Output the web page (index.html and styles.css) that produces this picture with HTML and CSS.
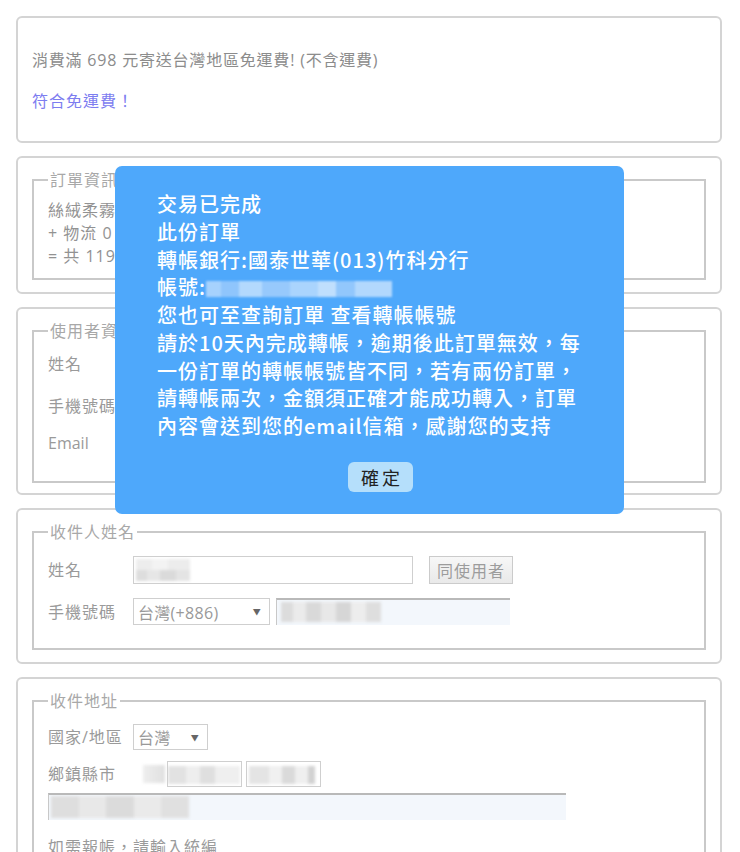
FILE: index.html
```html
<!DOCTYPE html>
<html lang="zh-Hant">
<head>
<meta charset="utf-8">
<title>訂單</title>
<link rel="stylesheet" href="styles.css">
</head>
<body>
<main class="page">
  <section class="card card-free">
    <p class="note">消費滿 698 元寄送台灣地區免運費! (不含運費)</p>
    <p class="ok">符合免運費！</p>
  </section>

  <section class="card">
    <fieldset class="box box-order">
      <legend>訂單資訊</legend>
      <div class="line">絲絨柔霧唇膏 x 1 = 1197 元</div>
      <div class="line">+ 物流 0 元</div>
      <div class="line">= 共 1197 元</div>
    </fieldset>
  </section>

  <section class="card card-user">
    <fieldset class="box box-user">
      <legend>使用者資料</legend>
      <div class="row">
        <span class="label">姓名</span>
        <div class="input input-name"></div>
      </div>
      <div class="row">
        <span class="label">手機號碼</span>
        <div class="select select-phone"><span>台灣(+886)</span><i class="arrow">▼</i></div>
        <div class="input input-filled input-phone"></div>
      </div>
      <div class="row">
        <span class="label label-latin">Email</span>
        <div class="input input-email"></div>
      </div>
    </fieldset>
  </section>

  <section class="card">
    <fieldset class="box box-recv">
      <legend>收件人姓名</legend>
      <div class="row">
        <span class="label">姓名</span>
        <div class="input input-name"><span class="blur blur-name"></span></div>
        <button class="same" type="button">同使用者</button>
      </div>
      <div class="row row-gap">
        <span class="label">手機號碼</span>
        <div class="select select-phone"><span>台灣(+886)</span><i class="arrow">▼</i></div>
        <div class="input input-filled input-phone"><span class="blur blur-phone"></span></div>
      </div>
    </fieldset>
  </section>

  <section class="card">
    <fieldset class="box box-addr">
      <legend>收件地址</legend>
      <div class="row">
        <span class="label">國家/地區</span>
        <div class="select select-country"><span>台灣</span><i class="arrow">▼</i></div>
      </div>
      <div class="row row-city">
        <span class="label">鄉鎮縣市</span>
        <span class="blur blur-city"></span>
        <div class="input input-small"><span class="blur blur-s1"></span></div>
        <div class="input input-small"><span class="blur blur-s2"></span></div>
      </div>
      <div class="row row-addr">
        <div class="input input-filled input-addr"><span class="blur blur-addr"></span></div>
      </div>
      <p class="hint">如需報帳，請輸入統編</p>
    </fieldset>
  </section>
</main>

<div class="modal" role="dialog">
  <p class="msg">交易已完成<br>此份訂單<br>轉帳銀行:國泰世華(013)竹科分行<br>帳號:<span class="acct"></span><br>您也可至查詢訂單 查看轉帳帳號</p>
  <p class="msg">請於10天內完成轉帳，逾期後此訂單無效，每一份訂單的轉帳帳號皆不同，若有兩份訂單，請轉帳兩次，金額須正確才能成功轉入，訂單內容會送到您的email信箱，感謝您的支持</p>
  <div class="actions"><button class="ok-btn" type="button">確定</button></div>
</div>
</body>
</html>
```

FILE: styles.css
```css
* { box-sizing: border-box; }

html, body { background: #fff; }

body {
  margin: 0;
  font-family: "Open Sans", "Noto Sans CJK TC", sans-serif;
  font-size: 16px;
  letter-spacing: 1px;
  color: #8a8a8a;
  overflow: hidden;
}

.page {
  padding: 16px 18px 0 16px;
}

.card {
  border: 2px solid #d4d4d4;
  border-radius: 6px;
  padding: 13px 14px 12px;
  margin-bottom: 13px;
}

.card-free { padding: 14px 14px 11px; }

.note, .ok {
  margin: 16px 0;
  line-height: 25px;
}
.note { color: #8c8c8c; letter-spacing: 0.8px; }
.ok { color: #7d7df0; }

.box {
  margin: 0;
  padding: 0 14px;
  border: 2px solid #c9c9c9;
  min-width: 0;
}

.box legend {
  padding: 0 2px;
  line-height: 18px;
  color: #a8a8a8;
  font-size: 16px;
}

.box-order { padding-top: 10px; padding-bottom: 10px; }
.line { line-height: 23px; color: #929292; }

.row {
  display: flex;
  align-items: center;
}

.label {
  width: 85px;
  flex: none;
  color: #9a9a9a;
  line-height: 20px;
}
.label-latin { letter-spacing: 0; }

.input {
  height: 28px;
  border: 1px solid #cfcfcf;
  background: #fff;
  position: relative;
  overflow: hidden;
}

.input-name { width: 280px; }
.input-email { width: 377px; }

.input-filled {
  background: #f3f7fc;
  border: none;
  border-top: 2px solid #b9b9b9;
  border-left: 1px solid #c8c8c8;
  height: 27px;
}
.input-phone { width: 234px; margin-left: 6px; }

.select {
  height: 27px;
  border: 1px solid #cfcfcf;
  background: #fff;
  display: flex;
  align-items: center;
  justify-content: space-between;
  padding: 0 8px 0 4px;
  color: #999;
  font-size: 16px;
  letter-spacing: 0.3px;
}
.select-phone { width: 137px; }
.select-country { width: 75px; height: 26px; }

.arrow {
  font-style: normal;
  font-size: 8px;
  color: #666;
}

.same {
  margin-left: 16px;
  width: 84px;
  height: 28px;
  border: 1px solid #cbcbcb;
  background: linear-gradient(#f7f7f7, #e9e9e9);
  color: #9c9c9c;
  font-family: "Noto Sans CJK TC", sans-serif;
  font-size: 16px;
  letter-spacing: 1px;
  padding: 0;
  border-radius: 0;
}

/* user card */
.card-user { padding-bottom: 10px; }
.box-user { padding-bottom: 24px; }
.box-user .row { margin-top: 10px; }
.box-user .row:nth-of-type(2) { margin-top: 14px; }

/* recipient card */
.box-recv { padding-bottom: 23px; }
.box-recv .row { margin-top: 15px; }
.box-recv .row-gap { margin-top: 14px; }

/* address card */
.box-addr { padding-bottom: 20px; }
.box-addr .row { margin-top: 14px; }
.box-addr .row-city { margin-top: 11px; }
.box-addr .row-addr { margin-top: 6px; }
.input-small { width: 75px; height: 26px; margin-left: 4px; }
.row-city .input-small:first-of-type { margin-left: 2px; }
.input-addr { width: 518px; }

.hint {
  margin: 16px 0 0;
  line-height: 22px;
  color: #9a9a9a;
}

/* blurred (redacted) content */
.blur {
  display: block;
  filter: blur(1.4px);
}
.blur-name {
  position: absolute;
  left: 2px; top: 2px;
  width: 54px; height: 22px;
  background:
    linear-gradient(90deg, #ededed 0 30%, #f3f3f3 30% 60%, #ececec 60% 100%) top / 100% 50% no-repeat,
    linear-gradient(90deg, #dddddd 0 20%, #e6e6e6 20% 45%, #dadada 45% 75%, #e4e4e4 75% 100%) bottom / 100% 50% no-repeat;
}
.blur-phone {
  position: absolute;
  left: 4px; top: 2px;
  width: 100px; height: 20px;
  background: linear-gradient(90deg, #dcdcdc 0 12%, #ebebeb 12% 25%, #d9d9d9 25% 40%, #e8e8e8 40% 55%, #d6d6d6 55% 70%, #ededed 70% 85%, #dedede 85% 100%);
}
.blur-city {
  width: 22px; height: 18px;
  margin-left: 10px;
  background: linear-gradient(90deg, #eeeeee, #e0e0e0);
}
.blur-s1 {
  position: absolute;
  left: 0; top: 4px;
  width: 72px; height: 18px;
  background: linear-gradient(90deg, #e2e2e2 0 25%, #eeeeee 25% 45%, #dfdfdf 45% 65%, #efefef 65% 100%);
}
.blur-s2 {
  position: absolute;
  left: 2px; top: 4px;
  width: 66px; height: 18px;
  background: linear-gradient(90deg, #e4e4e4 0 30%, #f0f0f0 30% 50%, #dadada 50% 70%, #efefef 70% 90%, #d2d2d2 90% 100%);
}
.blur-addr {
  position: absolute;
  left: 2px; top: 1px;
  width: 138px; height: 22px;
  background: linear-gradient(90deg, #dedede 0 20%, #e8e8e8 20% 40%, #dbdbdb 40% 60%, #eaeaea 60% 80%, #e0e0e0 80% 100%);
}

/* modal */
.modal {
  position: fixed;
  left: 115px;
  top: 166px;
  width: 509px;
  padding: 24px 42px 22px;
  background: #4ea8fb;
  border-radius: 7px;
  color: #fff;
  font-family: "Noto Sans CJK TC", sans-serif;
  font-size: 20px;
  font-weight: 500;
  line-height: 27.75px;
  letter-spacing: 1px;
}

.msg { margin: 0; }

.acct {
  display: inline-block;
  vertical-align: -2px;
  width: 186px;
  height: 16px;
  filter: blur(1px);
  background: linear-gradient(90deg, #a6d2fd 0 8%, #8fc5fc 8% 18%, #b3d9fd 18% 30%, #97c9fc 30% 45%, #aad4fd 45% 60%, #c0dffd 60% 70%, #92c7fc 70% 80%, #b2d8fd 80% 100%);
}

.actions {
  margin-top: 22px;
  text-align: center;
  padding-left: 22px;
}

.ok-btn {
  width: 65px;
  height: 30px;
  border: none;
  border-radius: 6px;
  background: #b5dffb;
  color: #222;
  font-family: "Noto Sans CJK TC", sans-serif;
  font-size: 18px;
  letter-spacing: 3px;
  padding: 0 0 0 3px;
}
```
